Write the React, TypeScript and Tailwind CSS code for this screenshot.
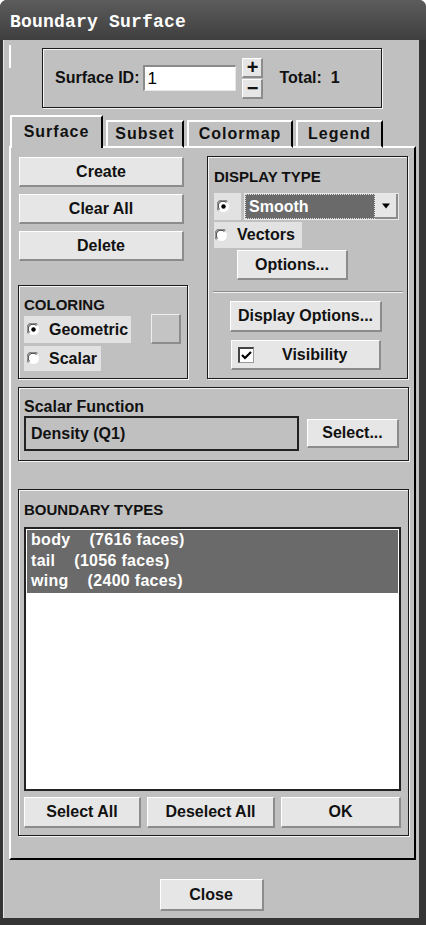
import React from 'react';

const font = "font-['Liberation_Sans',Arial,sans-serif]";

const Btn = ({ label, className = '', children }: { label?: string; className?: string; children?: React.ReactNode }) => (
  <div
    className={`flex items-center justify-center bg-[#e6e6e6] border-t border-l border-r-2 border-b-2 border-t-white border-l-white border-r-[#8c8c8c] border-b-[#8c8c8c] text-[16px] font-bold text-[#111] ${className}`}
  >
    {children ?? label}
  </div>
);

const Frame = ({ className = '', children }: { className?: string; children?: React.ReactNode }) => (
  <div className={`border border-[#1a1a1a] shadow-[1px_1px_0_#f4f4f4,inset_1px_1px_0_#f4f4f4] ${className}`}>{children}</div>
);

const Radio = ({ on }: { on?: boolean }) => (
  <svg width="13" height="13" viewBox="0 0 13 13" className="shrink-0">
    <circle cx="6.5" cy="6.5" r="5.5" fill="#fff" />
    <path d="M1.6 10.4 A5.5 5.5 0 0 1 10.4 1.6" fill="none" stroke="#808080" strokeWidth="1.3" />
    <path d="M2.6 9.4 A4.2 4.2 0 0 1 9.4 2.6" fill="none" stroke="#303030" strokeWidth="1" />
    {on && <circle cx="6.5" cy="6.5" r="2.2" fill="#000" />}
  </svg>
);

const RadioBox = ({ label, on, className = '' }: { label?: string; on?: boolean; className?: string }) => (
  <div className={`flex items-center bg-[#e2e2e2] pl-[3px] ${className}`}>
    <Radio on={on} />
    {label && <span className="ml-[9px] text-[16px] font-bold text-[#111]">{label}</span>}
  </div>
);

export default function App() {
  return (
    <div className={`w-[426px] h-[925px] flex flex-col bg-[#353535] rounded-t-[7px] ${font}`}>
      {/* Title bar */}
      <div className="h-[40px] shrink-0 flex items-center pl-[10px] pt-[4px] rounded-t-[7px] bg-gradient-to-b from-[#5c5c5c] to-[#3f3f3f]">
        <span className="font-['Liberation_Mono',monospace] font-bold text-[18px] text-white tracking-[0.2px]">
          Boundary Surface
        </span>
      </div>

      {/* Body */}
      <div className="flex-1 ml-[3px] mr-[7px] mb-[7px] bg-[#c0c0c0] border-l border-l-[#e8e8e8] flex flex-col">
        {/* Surface ID row */}
        <div className="flex pt-[5px] pl-[5px]">
          <div className="w-[2px] h-[23px] bg-white" />
          <Frame className="ml-[31px] mt-[3px] w-[340px] h-[60px] flex items-center pl-[12px]">
            <span className="text-[16px] font-bold text-[#111]">Surface ID:</span>
            <div className="ml-[4px] w-[93px] h-[26px] bg-white border-t-2 border-l-2 border-t-[#8a8a8a] border-l-[#8a8a8a] border-b border-r border-b-[#e8e8e8] border-r-[#e8e8e8] flex items-center pl-[2px] text-[17px] text-black">
              1
            </div>
            <div className="ml-[6px] flex flex-col gap-[1px]">
              <Btn className="w-[21px] h-[20px] !text-[20px] leading-none">+</Btn>
              <Btn className="w-[21px] h-[20px] !text-[20px] leading-none">−</Btn>
            </div>
            <span className="ml-[16px] text-[16px] font-bold text-[#111] whitespace-pre">Total:  1</span>
          </Frame>
        </div>

        {/* Tabs */}
        <div className="flex items-end mt-[9px] pl-[6px] h-[31px] relative z-10 -mb-[2px] text-[16px] font-bold tracking-[1px] text-[#111]">
          <div className="w-[93px] h-[33px] bg-[#c0c0c0] border-t-2 border-l-2 border-r-2 border-t-white border-l-white border-r-black flex items-center justify-center pb-[2px]">
            Surface
          </div>
          <div className="ml-[3px] w-[78px] h-[28px] border-t-2 border-l-2 border-r-2 border-t-white border-l-white border-r-black border-b-2 border-b-white flex items-center justify-center">
            Subset
          </div>
          <div className="ml-[3px] w-[106px] h-[28px] border-t-2 border-l-2 border-r-2 border-t-white border-l-white border-r-black border-b-2 border-b-white flex items-center justify-center">
            Colormap
          </div>
          <div className="ml-[3px] w-[87px] h-[28px] border-t-2 border-l-2 border-r-2 border-t-white border-l-white border-r-black border-b-2 border-b-white flex items-center justify-center">
            Legend
          </div>
        </div>

        {/* Tab panel */}
        <div className="ml-[5px] w-[407px] h-[714px] border-t-2 border-l-2 border-t-white border-l-white border-r-2 border-b-2 border-r-black border-b-black pl-[7px] pt-[8px] flex flex-col">
          <div className="flex">
            {/* left column */}
            <div className="w-[170px] flex flex-col">
              <Btn label="Create" className="ml-[1px] mt-[1px] w-[165px] h-[30px]" />
              <Btn label="Clear All" className="ml-[1px] mt-[7px] w-[165px] h-[30px]" />
              <Btn label="Delete" className="ml-[1px] mt-[7px] w-[165px] h-[30px]" />
              <Frame className="mt-[24px] w-[170px] h-[94px] pl-[5px] pt-[8px]">
                <div className="h-[20px] text-[15px] font-bold text-[#111]">COLORING</div>
                <div className="flex mt-[2px]">
                  <div className="flex flex-col gap-[3px]">
                    <RadioBox label="Geometric" on className="w-[107px] h-[27px]" />
                    <RadioBox label="Scalar" className="w-[77px] h-[25px]" />
                  </div>
                  <div className="ml-auto mr-[6px] -mt-[2px] w-[30px] h-[30px] bg-[#c4c4c4] border-t border-l border-t-[#eeeeee] border-l-[#eeeeee] border-r-2 border-b-2 border-r-[#8c8c8c] border-b-[#8c8c8c]" />
                </div>
              </Frame>
            </div>

            {/* Display type */}
            <Frame className="ml-[19px] w-[201px] h-[223px] pl-[6px] pt-[9px] flex flex-col">
              <div className="h-[20px] text-[15px] font-bold text-[#111]">DISPLAY TYPE</div>
              <div className="flex mt-[7px]">
                <RadioBox on className="w-[27px] h-[27px]" />
                <div className="ml-[3px] w-[155px] h-[27px] bg-[#e8e8e8] p-[1px] flex">
                  <div className="flex-1 bg-[#6a6a6a] border border-dotted border-[#ddd] flex items-center pl-[3px] text-[16px] font-bold text-white">
                    Smooth
                  </div>
                  <div className="w-[23px] bg-[#e6e6e6] border-r-2 border-b-2 border-r-[#8c8c8c] border-b-[#8c8c8c] flex items-center justify-center">
                    <svg width="10" height="6" viewBox="0 0 10 6">
                      <path d="M1 0.5 L9 0.5 L5 5.5 Z" fill="#000" />
                    </svg>
                  </div>
                </div>
              </div>
              <RadioBox label="Vectors" className="mt-[2px] w-[88px] h-[26px] !pl-[1px]" />
              <Btn label="Options..." className="mt-[2px] ml-[23px] w-[111px] h-[30px]" />
              <div className="mt-[11px] -ml-[1px] w-[190px] h-[2px] border-t border-t-[#8c8c8c] border-b border-b-[#f0f0f0]" />
              <Btn label="Display Options..." className="mt-[8px] ml-[16px] w-[152px] h-[31px]" />
              <Btn className="mt-[8px] ml-[17px] w-[150px] h-[30px] !justify-start pl-[6px]">
                <div className="w-[16px] h-[16px] bg-white border-t-2 border-l-2 border-t-[#444] border-l-[#444] border-r border-b border-r-[#999] border-b-[#999] flex items-center justify-center">
                  <svg width="11" height="9" viewBox="0 0 11 9">
                    <path d="M1 4 L4 7 L10 1" fill="none" stroke="#000" strokeWidth="2.2" />
                  </svg>
                </div>
                <span className="ml-[28px]">Visibility</span>
              </Btn>
            </Frame>
          </div>

          {/* Scalar function */}
          <Frame className="mt-[8px] w-[391px] h-[74px] pl-[5px] pt-[7px]">
            <div className="h-[20px] text-[16px] font-bold text-[#111]">Scalar Function</div>
            <div className="flex items-center mt-[1px]">
              <div className="w-[275px] h-[35px] border-2 border-[#222] flex items-center pl-[5px] text-[16px] font-bold text-[#111]">
                Density (Q1)
              </div>
              <Btn label="Select..." className="ml-[8px] w-[92px] h-[29px]" />
            </div>
          </Frame>

          {/* Boundary types */}
          <Frame className="mt-[28px] w-[391px] h-[347px] pl-[5px] pt-[9px]">
            <div className="h-[20px] text-[15px] font-bold text-[#111]">BOUNDARY TYPES</div>
            <div className="mt-[8px] w-[377px] h-[264px] bg-white border-2 border-[#222] p-[1px]">
              <div className="bg-[#6a6a6a] text-white text-[16px] font-bold leading-[20.5px] pl-[4px] pb-[1px] whitespace-pre tracking-[0.3px]">
                <div>body    (7616 faces)</div>
                <div>tail    (1056 faces)</div>
                <div>wing    (2400 faces)</div>
              </div>
            </div>
            <div className="flex gap-[6px] mt-[6px]">
              <Btn label="Select All" className="w-[117px] h-[31px]" />
              <Btn label="Deselect All" className="w-[128px] h-[31px]" />
              <Btn label="OK" className="w-[120px] h-[31px]" />
            </div>
          </Frame>
        </div>

        {/* Close */}
        <div className="flex justify-center mt-[19px]">
          <Btn label="Close" className="w-[104px] h-[32px]" />
        </div>
      </div>
    </div>
  );
}
